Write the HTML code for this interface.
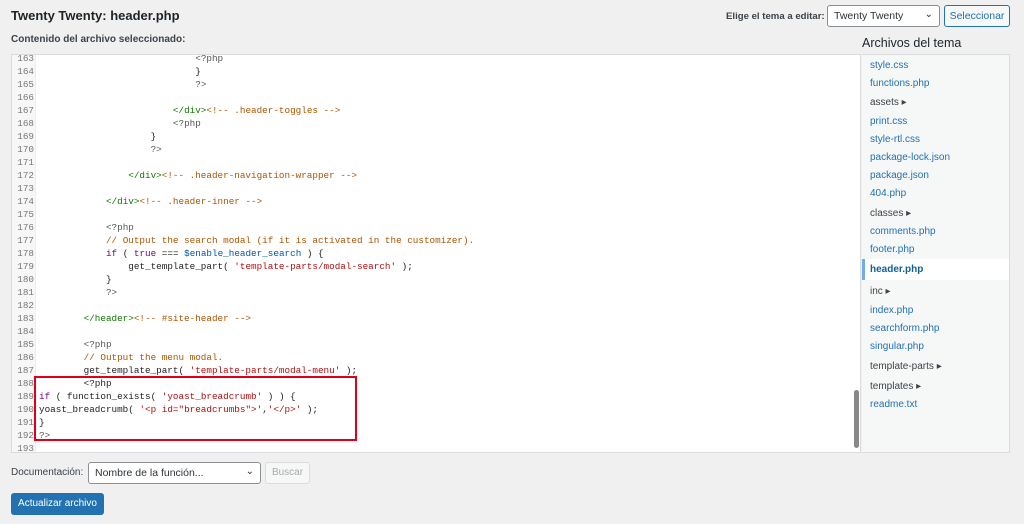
<!DOCTYPE html>
<html><head><meta charset="utf-8"><style>
*{box-sizing:border-box;margin:0;padding:0}
body{width:1024px;height:524px;background:#f0f0f1;font-family:"Liberation Sans",sans-serif;color:#1d2327;position:relative;overflow:hidden}
.abs{position:absolute}
h1{position:absolute;left:11px;top:8px;font-size:13px;font-weight:bold;color:#1d2327}
.lbl{font-size:10px;color:#1d2327}
.sel{background:#fff;border:1px solid #8c8f94;border-radius:3px;font-size:10.5px;padding:4px 6px;color:#2c3338}
.btn{border:1px solid #2271b1;color:#2271b1;background:#f6f7f7;border-radius:3px;font-size:10.5px;text-align:center}
#code{left:11px;top:54px;width:850px;height:399px;background:#fff;border:1px solid #dcdcde;overflow:hidden}
#gut{left:0;top:0;width:24px;height:399px;background:#f7f7f7;border-right:1px solid #eee}
.ln{position:absolute;left:0;width:22px;text-align:right;font:9.3px "Liberation Mono",monospace;color:#777}
.cl{position:absolute;left:27px;font:9.3px "Liberation Mono",monospace;color:#222;white-space:pre}
.g{color:#117700}.o{color:#aa5500}.r{color:#aa1111}.k{color:#770088}.gr{color:#555}
#side{left:862px;top:54px;width:148px;height:399px;background:#f6f7f7;border:1px solid #dcdcde;border-left:none}
.f{position:absolute;left:8px;font-size:10px;color:#2271b1}
.d{position:absolute;left:8px;font-size:10px;color:#3c434a}
</style></head><body>
<h1>Twenty Twenty: header.php</h1>
<div class="abs lbl" style="left:726px;top:11px;font-size:9.6px;font-weight:bold;color:#3c434a">Elige el tema a editar:</div>
<div class="abs sel" style="left:827px;top:5px;width:113px;height:22px">Twenty Twenty<span style="position:absolute;right:6px;top:3px;font-size:10px">&#8964;</span></div>
<div class="abs btn" style="left:944px;top:5px;width:66px;height:22px;line-height:20px">Seleccionar</div>
<div class="abs lbl" style="left:11px;top:34px;font-weight:bold;color:#3c434a">Contenido del archivo seleccionado:</div>
<div class="abs" style="left:862px;top:36px;font-size:12.5px;color:#1d2327">Archivos del tema</div>
<div id="code" class="abs">
<div id="gut" class="abs"></div>
<div id="lines"></div>
<div class="abs" style="left:842px;top:335px;width:5px;height:58px;background:#888;border-radius:3px"></div>
<div class="abs" style="left:22px;top:321px;width:323px;height:65px;border:2px solid #e0001b"></div>
</div>
<div id="side" class="abs">
<div class="f" style="top:5px">style.css</div>
<div class="f" style="top:23px">functions.php</div>
<div class="d" style="top:42px">assets &#9656;</div>
<div class="f" style="top:61px">print.css</div>
<div class="f" style="top:79px">style-rtl.css</div>
<div class="f" style="top:97px">package-lock.json</div>
<div class="f" style="top:115px">package.json</div>
<div class="f" style="top:133px">404.php</div>
<div class="d" style="top:153px">classes &#9656;</div>
<div class="f" style="top:171px">comments.php</div>
<div class="f" style="top:189px">footer.php</div>
<div class="abs" style="left:0;top:204px;width:147px;height:21px;background:#fff;border-left:3px solid #72aee6"></div>
<div class="f" style="top:209px;font-weight:bold;color:#135e96">header.php</div>
<div class="d" style="top:231px">inc &#9656;</div>
<div class="f" style="top:250px">index.php</div>
<div class="f" style="top:268px">searchform.php</div>
<div class="f" style="top:286px">singular.php</div>
<div class="d" style="top:306px">template-parts &#9656;</div>
<div class="d" style="top:326px">templates &#9656;</div>
<div class="f" style="top:344px">readme.txt</div>
</div>
<div class="abs lbl" style="left:11px;top:467px;color:#3c434a">Documentación:</div>
<div class="abs sel" style="left:88px;top:462px;width:173px;height:22px">Nombre de la función...<span style="position:absolute;right:6px;top:3px;font-size:10px">&#8964;</span></div>
<div class="abs" style="left:265px;top:462px;width:45px;height:22px;border:1px solid #dcdcde;background:#f6f7f7;color:#a7aaad;font-size:10px;text-align:center;line-height:20px;border-radius:3px">Buscar</div>
<div class="abs" style="left:11px;top:493px;width:93px;height:22px;background:#2271b1;border-radius:3px;color:#fff;font-size:10px;text-align:center;line-height:22px">Actualizar archivo</div>
<script>
var L=[
[28,'<span class="gr">&lt;?php</span>'],[28,'}'],[28,'<span class="gr">?&gt;</span>'],[0,''],
[24,'<span class="g">&lt;/div&gt;</span><span class="o">&lt;!-- .header-toggles --&gt;</span>'],[24,'<span class="gr">&lt;?php</span>'],[20,'}'],[20,'<span class="gr">?&gt;</span>'],[0,''],
[16,'<span class="g">&lt;/div&gt;</span><span class="o">&lt;!-- .header-navigation-wrapper --&gt;</span>'],[0,''],
[12,'<span class="g">&lt;/div&gt;</span><span class="o">&lt;!-- .header-inner --&gt;</span>'],[0,''],
[12,'<span class="gr">&lt;?php</span>'],[12,'<span class="o">// Output the search modal (if it is activated in the customizer).</span>'],
[12,'<span class="k">if</span> ( <span class="k">true</span> === <span style="color:#0055aa">$enable_header_search</span> ) {'],
[16,'get_template_part( <span class="r">\'template-parts/modal-search\'</span> );'],[12,'}'],[12,'<span class="gr">?&gt;</span>'],[0,''],
[8,'<span class="g">&lt;/header&gt;</span><span class="o">&lt;!-- #site-header --&gt;</span>'],[0,''],
[8,'<span class="gr">&lt;?php</span>'],[8,'<span class="o">// Output the menu modal.</span>'],
[8,'get_template_part( <span class="r">\'template-parts/modal-menu\'</span> );'],
[8,'&lt;?php'],[0,'<span class="k">if</span> ( function_exists( <span class="r">\'yoast_breadcrumb\'</span> ) ) {'],
[0,'yoast_breadcrumb( <span class="r">\'&lt;p id="breadcrumbs"&gt;\'</span>,<span class="r">\'&lt;/p&gt;\'</span> );'],[0,'}'],[0,'<span class="gr">?&gt;</span>'],[0,'']];
var h='';for(var i=0;i<L.length;i++){var t=-2+i*13;h+='<div class="ln" style="top:'+t+'px">'+(163+i)+'</div><div class="cl" style="top:'+t+'px;left:'+(27+L[i][0]*5.58)+'px">'+L[i][1]+'</div>';}
document.getElementById('lines').innerHTML=h;
</script>
</body></html>
